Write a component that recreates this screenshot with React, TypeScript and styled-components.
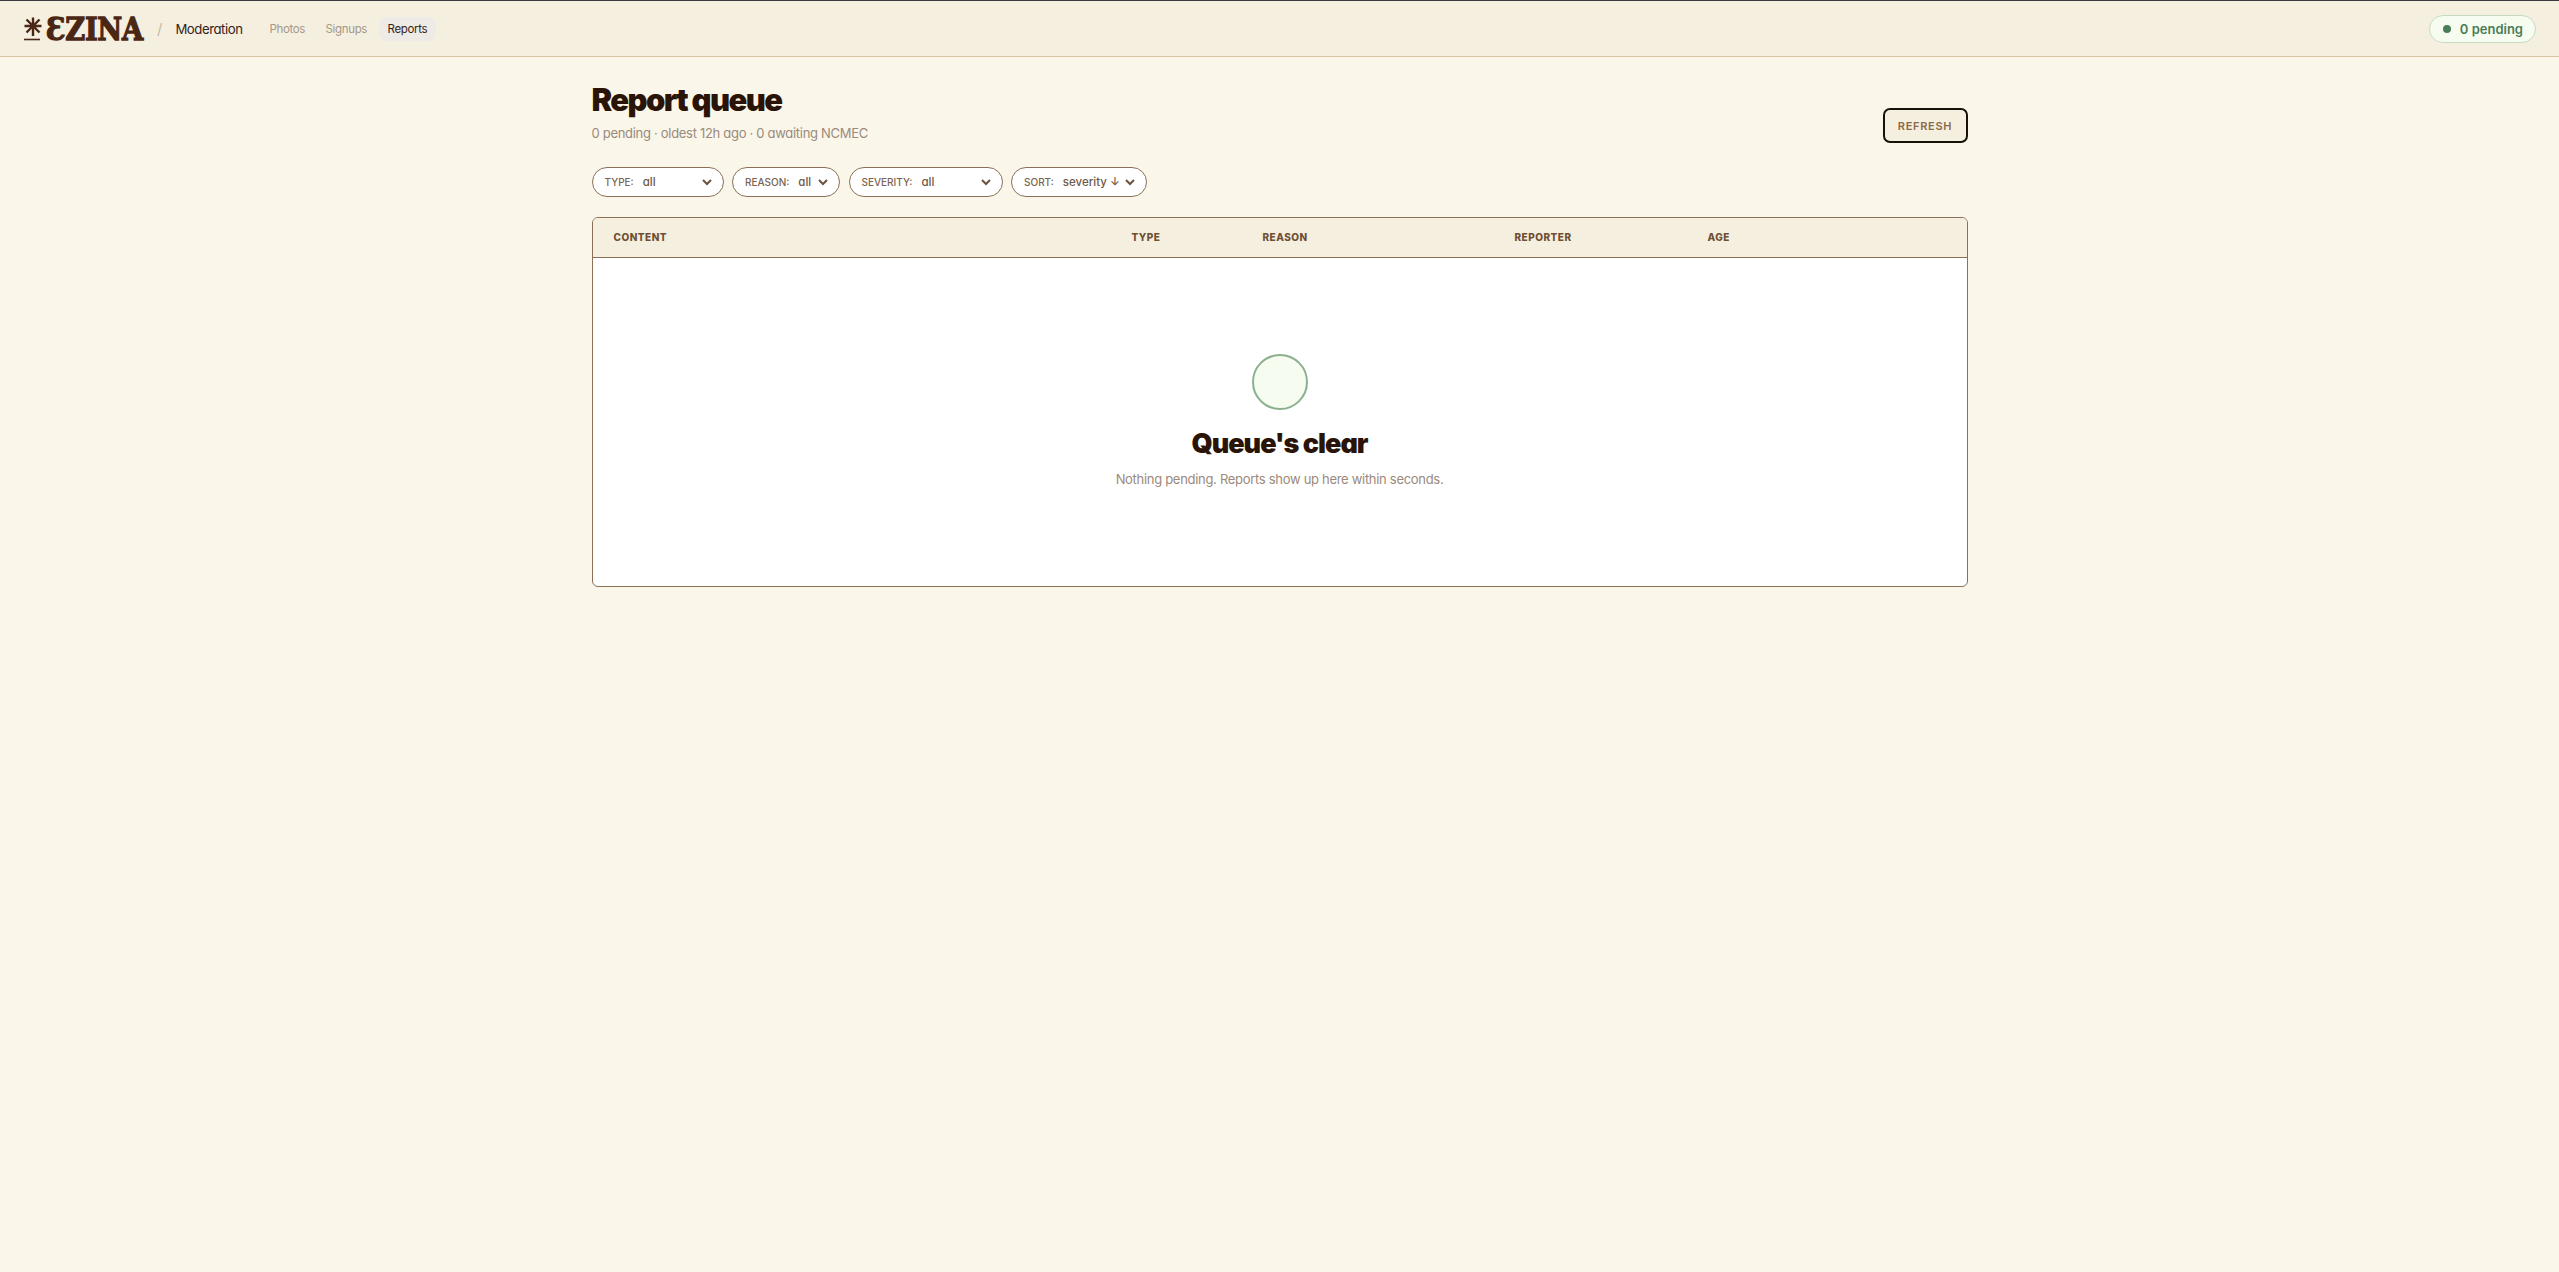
import React from 'react';
import styled, {createGlobalStyle} from 'styled-components';

const GlobalStyle = createGlobalStyle`
  html, body {
    margin: 0;
    padding: 0;
    min-height: 100%;
    background: #fbf6ea;
    font-family: Inter, "Noto Sans", sans-serif;
    font-feature-settings: "cv11" 1;
  }
`;

const Page = styled.div`
  min-height: 1272px;
  background: #fbf6ea;
  border-top: 1px solid #3a3a40;
  box-sizing: border-box;
`;

const TopBar = styled.header`
  display: flex;
  align-items: center;
  justify-content: space-between;
  height: 56px;
  box-sizing: border-box;
  padding: 0 23px;
  background: #f5efe0;
  border-bottom: 1px solid #d9c3a5;
`;

const TopLeft = styled.div`
  display: flex;
  align-items: center;
`;

const LogoLink = styled.a`
  display: flex;
  align-items: center;
  gap: 3px;
  width: 122px;
  color: #4a2714;
  text-decoration: none;
`;

const LogoText = styled.span`
  font-family: "DejaVu Serif", serif;
  font-weight: 700;
  font-size: 31px;
  line-height: 30px;
  letter-spacing: -0.4px;
  -webkit-text-stroke: 1.3px #4a2714;
  transform: scaleX(0.88);
  transform-origin: left center;
`;

const Slash = styled.span`
  margin-left: 12px;
  color: #c9b9a4;
  font-size: 15px;
`;

const Section = styled.span`
  margin-left: 13px;
  margin-right: 18px;
  color: #33241a;
  font-size: 13.2px;
  letter-spacing: -0.45px;
`;

const Nav = styled.nav`
  display: flex;
  align-items: center;
  gap: 2.5px;
`;

const NavItem = styled.a<{$active?: boolean}>`
  padding: 5px 9px;
  border-radius: 8px;
  font-size: 11.5px;
  line-height: 14px;
  letter-spacing: -0.35px;
  color: ${p => (p.$active ? '#33241a' : '#a5978a')};
  background: ${p => (p.$active ? '#eeebe6' : 'transparent')};
`;

const PendingPill = styled.div`
  display: flex;
  align-items: center;
  gap: 9px;
  height: 28px;
  box-sizing: border-box;
  padding: 0 12px 0 13px;
  border: 1px solid #c6dac3;
  border-radius: 14px;
  background: #f6fdf0;
  color: #4a7c59;
  font-size: 13px;
  font-weight: 600;
`;

const Dot = styled.span`
  width: 8px;
  height: 8px;
  border-radius: 50%;
  background: #4a7c59;
`;

const Main = styled.main`
  width: 1376px;
  margin: 0 auto;
  padding-top: 26px;
`;

const HeadRow = styled.div`
  display: flex;
  align-items: flex-end;
  justify-content: space-between;
`;

const Title = styled.h1`
  margin: 0;
  color: #2a1408;
  font-size: 31px;
  line-height: 34px;
  font-weight: 900;
  letter-spacing: -1.6px;
`;

const Subtitle = styled.p`
  margin: 7px 0 0;
  color: #9a8a7c;
  font-size: 13px;
  line-height: 18px;
  letter-spacing: -0.3px;
`;

const RefreshButton = styled.button`
  height: 35px;
  width: 85px;
  margin-bottom: -1px;
  border: 2px solid #17110a;
  border-radius: 7px;
  background: #f5efe0;
  color: #8b6a4a;
  font-family: inherit;
  font-size: 11px;
  font-weight: 600;
  letter-spacing: 0.7px;
`;

const Filters = styled.div`
  display: flex;
  gap: 8.5px;
  margin-top: 25px;
`;

const Chip = styled.div<{$w: number}>`
  display: flex;
  align-items: center;
  width: ${p => p.$w}px;
  height: 30px;
  box-sizing: border-box;
  padding: 0 10px 0 12px;
  border: 1px solid #8b6f57;
  border-radius: 15px;
  background: #fff;
`;

const ChipLabel = styled.span`
  color: #7b6350;
  font-size: 10px;
  font-weight: 500;
  margin-right: 9px;
`;

const ChipValue = styled.span`
  flex: 1;
  color: #6f5a4a;
  font-size: 11.5px;
  font-weight: 500;
  white-space: nowrap;
`;

const Chevron = () => (
    <svg width="12" height="12" viewBox="0 0 12 12" fill="none">
        <path d="M2 4l4 4 4-4" stroke="#6b5240" strokeWidth="2"/>
    </svg>
);

const Card = styled.section`
  margin-top: 20px;
  box-sizing: border-box;
  height: 370px;
  border: 1px solid #8b6f57;
  border-radius: 6px;
  background: #fff;
  overflow: hidden;
`;

const TableHead = styled.div`
  display: grid;
  grid-template-columns: 518px 131px 252px 193px 1fr;
  align-items: center;
  height: 40px;
  box-sizing: border-box;
  padding: 0 0 2px 21px;
  background: #f5efe0;
  border-bottom: 1px solid #8b6f57;
`;

const HeadCell = styled.span`
  color: #6f4f33;
  font-size: 10px;
  font-weight: 800;
  letter-spacing: 0.5px;
`;

const Empty = styled.div`
  display: flex;
  flex-direction: column;
  align-items: center;
  padding-top: 96px;
`;

const EmptyCircle = styled.div`
  width: 56px;
  height: 56px;
  box-sizing: border-box;
  border: 2px solid #8bb08f;
  border-radius: 50%;
  background: #f6fdf0;
`;

const EmptyTitle = styled.h2`
  margin: 18px 0 0;
  color: #2a1408;
  font-size: 27px;
  line-height: 32px;
  font-weight: 900;
  letter-spacing: -1px;
`;

const EmptyText = styled.p`
  margin: 10px 0 0;
  color: #9a8a7c;
  font-size: 13px;
  line-height: 18px;
  letter-spacing: -0.3px;
`;

const filters = [
    {label: 'TYPE:', value: 'all', w: 132},
    {label: 'REASON:', value: 'all', w: 108},
    {label: 'SEVERITY:', value: 'all', w: 154},
    {label: 'SORT:', value: 'severity ↓', w: 136},
];

const columns = ['CONTENT', 'TYPE', 'REASON', 'REPORTER', 'AGE'];

export default function App() {
    return (
        <Page>
            <GlobalStyle/>
            <TopBar>
                <TopLeft>
                    <LogoLink>
                        <svg width="20" height="25" viewBox="0 0 20 25" fill="none" style={{flexShrink: 0}}>
                            <g stroke="#4a2714" strokeWidth="2.4" strokeLinecap="butt">
                                <path d="M10 1.5V20"/>
                                <path d="M1.5 10h17M3.5 3.5l13 13M16.5 3.5l-13 13"/>
                            </g>
                            <path d="M1 23.5h16" stroke="#4a2714" strokeWidth="1.6"/>
                        </svg>
                        <LogoText>ƐZINA</LogoText>
                    </LogoLink>
                    <Slash>/</Slash>
                    <Section>Moderation</Section>
                    <Nav>
                        <NavItem>Photos</NavItem>
                        <NavItem>Signups</NavItem>
                        <NavItem $active>Reports</NavItem>
                    </Nav>
                </TopLeft>
                <PendingPill>
                    <Dot/>
                    0 pending
                </PendingPill>
            </TopBar>
            <Main>
                <HeadRow>
                    <div>
                        <Title>Report queue</Title>
                        <Subtitle>0 pending · oldest 12h ago · 0 awaiting NCMEC</Subtitle>
                    </div>
                    <RefreshButton>REFRESH</RefreshButton>
                </HeadRow>
                <Filters>
                    {filters.map(f => (
                        <Chip key={f.label} $w={f.w}>
                            <ChipLabel>{f.label}</ChipLabel>
                            <ChipValue>{f.value}</ChipValue>
                            <Chevron/>
                        </Chip>
                    ))}
                </Filters>
                <Card>
                    <TableHead>
                        {columns.map(c => <HeadCell key={c}>{c}</HeadCell>)}
                    </TableHead>
                    <Empty>
                        <EmptyCircle/>
                        <EmptyTitle>Queue's clear</EmptyTitle>
                        <EmptyText>Nothing pending. Reports show up here within seconds.</EmptyText>
                    </Empty>
                </Card>
            </Main>
        </Page>
    );
}
